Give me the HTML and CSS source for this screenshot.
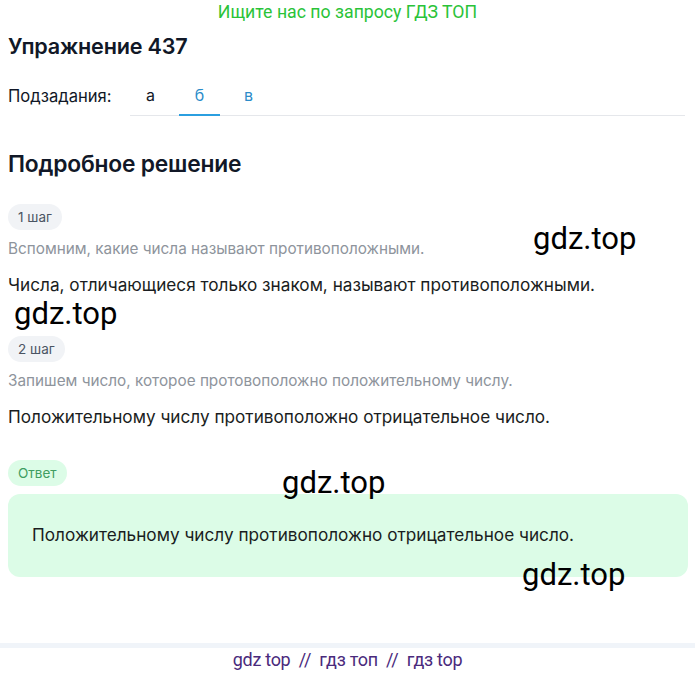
FILE: index.html
```html
<!DOCTYPE html>
<html lang="ru">
<head>
<meta charset="utf-8">
<link rel="stylesheet" href="styles.css">
</head>
<body>
<div class="page">
  <div class="banner">Ищите нас по запросу ГДЗ ТОП</div>
  <h1 class="title">Упражнение 437</h1>
  <div class="subtasks">
    <span class="label">Подзадания:</span>
    <div class="tabs">
      <span class="tab">а</span>
      <span class="tab active">б</span>
      <span class="tab link">в</span>
    </div>
  </div>
  <h2 class="section">Подробное решение</h2>
  <div class="step">
    <span class="pill">1 шаг</span>
    <p class="hint">Вспомним, какие числа называют противоположными.</p>
    <p class="text">Числа, отличающиеся только знаком, называют противоположными.</p>
  </div>
  <div class="step">
    <span class="pill">2 шаг</span>
    <p class="hint">Запишем число, которое протовоположно положительному числу.</p>
    <p class="text">Положительному числу противоположно отрицательное число.</p>
  </div>
  <div class="answer">
    <span class="pill green">Ответ</span>
    <div class="answer-box">Положительному числу противоположно отрицательное число.</div>
  </div>
  <div class="spacer"></div>
  <div class="footer">gdz top &nbsp;//&nbsp; гдз топ &nbsp;//&nbsp; гдз top</div>

  <span class="wm wm1">gdz.top</span>
  <span class="wm wm2">gdz.top</span>
  <span class="wm wm3">gdz.top</span>
  <span class="wm wm4">gdz.top</span>
</div>
</body>
</html>
```
FILE: styles.css
```css
* { box-sizing: border-box; }
html, body { margin: 0; padding: 0; background: #fff; }
body {
  font-family: Inter, "Noto Sans", sans-serif;
  color: #111827;
  width: 695px;
  height: 675px;
  overflow: hidden;
}
.page {
  position: relative;
  display: flex;
  flex-direction: column;
  height: 675px;
}
.banner {
  font-family: Roboto, sans-serif;
  color: #2ac338;
  font-size: 17.7px;
  text-align: center;
  line-height: 20px;
  padding-top: 2px;
}
.title {
  margin: 10px 0 0 8px;
  font-size: 21.6px;
  font-weight: 600;
  line-height: 28px;
  letter-spacing: -0.2px;
}
.subtasks {
  display: flex;
  align-items: flex-end;
  margin: 25px 10px 0 8px;
}
.label {
  font-size: 16.6px;
  line-height: 20px;
  padding-bottom: 10px;
  width: 122px;
}
.tabs {
  flex: 1;
  display: flex;
  border-bottom: 1px solid #e5e7eb;
}
.tab {
  width: 41px;
  text-align: center;
  font-size: 16px;
  line-height: 20px;
  padding-bottom: 10px;
  margin-right: 8px;
  color: #111827;
}
.tab.active {
  color: #2b8cc9;
  border-bottom: 2px solid #2b9fe0;
  margin-bottom: -1px;
  padding-bottom: 9px;
}
.tab.link { color: #2b8cc9; }
.section {
  margin: 33px 0 0 8px;
  font-size: 22.8px;
  font-weight: 600;
  line-height: 30px;
  letter-spacing: -0.2px;
}
.step {
  display: flex;
  flex-direction: column;
  align-items: flex-start;
  padding-left: 8px;
}
.pill {
  display: inline-block;
  background: #f1f3f6;
  color: #4b5563;
  font-size: 13.5px;
  line-height: 26px;
  height: 26px;
  padding: 0 10px;
  border-radius: 13px;
}
.hint {
  margin: 9px 0 0 0;
  font-size: 15.3px;
  line-height: 20px;
  color: #8e949c;
}
.text {
  margin: 15px 0 0 0;
  font-size: 17.2px;
  line-height: 22px;
  color: #1a1d21;
}
.section + .step { margin-top: 25px; }
.step + .step { margin-top: 40px; }
.answer {
  margin-top: 32px;
  padding: 0 7px 0 8px;
  display: flex;
  flex-direction: column;
  align-items: flex-start;
}
.pill.green {
  background: #dcfce7;
  color: #3f9d61;
}
.answer-box {
  align-self: stretch;
  margin-top: 8px;
  background: #dcfce7;
  border-radius: 12px;
  padding: 30px 24px 31px;
  font-size: 17.2px;
  line-height: 22px;
  color: #1a1d21;
}
.spacer { flex: 1; }
.footer {
  border-top: 5px solid #f0f4f9;
  font-family: Roboto, sans-serif;
  color: #4a2a7c;
  font-size: 18px;
  letter-spacing: -0.3px;
  text-align: center;
  line-height: 22px;
  padding: 1px 0 4px;
}
.wm {
  position: absolute;
  font-family: Roboto, sans-serif;
  font-size: 31px;
  color: #000;
  line-height: 1;
}
.wm1 { left: 533px; top: 223px; }
.wm2 { left: 14px; top: 298px; }
.wm3 { left: 282px; top: 467px; }
.wm4 { left: 522px; top: 559px; }
```
